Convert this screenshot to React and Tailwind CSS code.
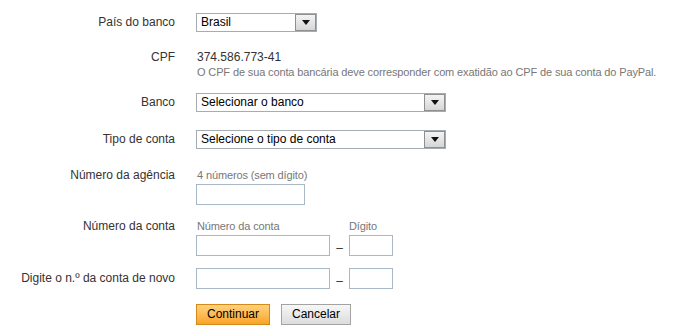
import React from "react";

const font = { fontFamily: '"Liberation Sans", Arial, sans-serif' };

function Select({ value, width }) {
  return (
    <div className={`flex h-[19px] items-stretch border border-[#a5acb2] bg-white ${width}`}>
      <span className="flex-1 pl-[4px] text-[12px] leading-[17px] text-black">{value}</span>
      <span className="flex w-[21px] items-center justify-center border border-[#8e8f8f] bg-gradient-to-b from-[#f4f4f4] to-[#d6d6d6]">
        <svg width="8" height="5" viewBox="0 0 8 5">
          <path d="M0 0h8L4 5z" fill="#111" />
        </svg>
      </span>
    </div>
  );
}

function Input({ width }) {
  return <div className={`h-[21px] border border-[#a9b8c6] bg-white ${width}`} />;
}

function Label({ children, className = "" }) {
  return (
    <div className={`w-[176px] shrink-0 pr-[1px] text-right text-[12px] text-[#333] ${className}`}>
      {children}
    </div>
  );
}

// small grey hint text
const hint = "text-[11px] leading-[14px] tracking-[-0.13px] text-[#777]";

export default function App() {
  return (
    <div className="h-[330px] w-[691px] bg-white pt-[13px]" style={font}>
      {/* País do banco */}
      <div className="flex gap-[20px]">
        <Label className="leading-[19px]">País do banco</Label>
        <Select value="Brasil" width="w-[121px]" />
      </div>

      {/* CPF */}
      <div className="mt-[18px] flex gap-[20px]">
        <Label className="leading-[14px]">CPF</Label>
        <div className="pl-[1px]">
          <div className="text-[12px] leading-[14px] text-[#333]">374.586.773-41</div>
          <div className={`mt-[1px] ${hint}`}>
            O CPF de sua conta bancária deve corresponder com exatidão ao CPF de sua conta do PayPal.
          </div>
        </div>
      </div>

      {/* Banco */}
      <div className="mt-[14px] flex gap-[20px]">
        <Label className="leading-[19px]">Banco</Label>
        <Select value="Selecionar o banco" width="w-[250px]" />
      </div>

      {/* Tipo de conta */}
      <div className="mt-[18px] flex gap-[20px]">
        <Label className="leading-[19px]">Tipo de conta</Label>
        <Select value="Selecione o tipo de conta" width="w-[250px]" />
      </div>

      {/* Número da agência */}
      <div className="mt-[19px] flex gap-[20px]">
        <Label className="leading-[14px]">Número da agência</Label>
        <div>
          <div className={`pl-[1px] ${hint}`}>4 números (sem dígito)</div>
          <div className="mt-[2px]">
            <Input width="w-[109px]" />
          </div>
        </div>
      </div>

      {/* Número da conta */}
      <div className="mt-[14px] flex gap-[20px]">
        <Label className="leading-[14px]">Número da conta</Label>
        <div className="flex items-end">
          <div>
            <div className={`pl-[1px] ${hint}`}>Número da conta</div>
            <div className="mt-[2px]">
              <Input width="w-[134px]" />
            </div>
          </div>
          <span className="w-[19px] pb-[1px] text-center text-[12px] leading-[14px] text-[#333]">–</span>
          <div>
            <div className={hint}>Dígito</div>
            <div className="mt-[2px]">
              <Input width="w-[44px]" />
            </div>
          </div>
        </div>
      </div>

      {/* Digite o n.º da conta de novo */}
      <div className="mt-[12px] flex gap-[20px]">
        <Label className="leading-[21px]">Digite o n.º da conta de novo</Label>
        <div className="flex items-end">
          <Input width="w-[134px]" />
          <span className="w-[19px] pb-[1px] text-center text-[12px] leading-[14px] text-[#333]">–</span>
          <Input width="w-[44px]" />
        </div>
      </div>

      {/* Buttons */}
      <div className="mt-[15px] flex gap-[20px]">
        <div className="w-[176px] shrink-0" />
        <div className="flex gap-[11px]">
          <button className="h-[21px] w-[74px] border border-[#d5891a] bg-gradient-to-b from-[#ffd27a] to-[#f9a41f] text-[12px] leading-[19px] text-black">
            Continuar
          </button>
          <button className="h-[21px] w-[70px] border border-[#a3a3a3] bg-gradient-to-b from-[#f7f7f7] to-[#dcdcdc] text-[12px] leading-[19px] text-black">
            Cancelar
          </button>
        </div>
      </div>
    </div>
  );
}
